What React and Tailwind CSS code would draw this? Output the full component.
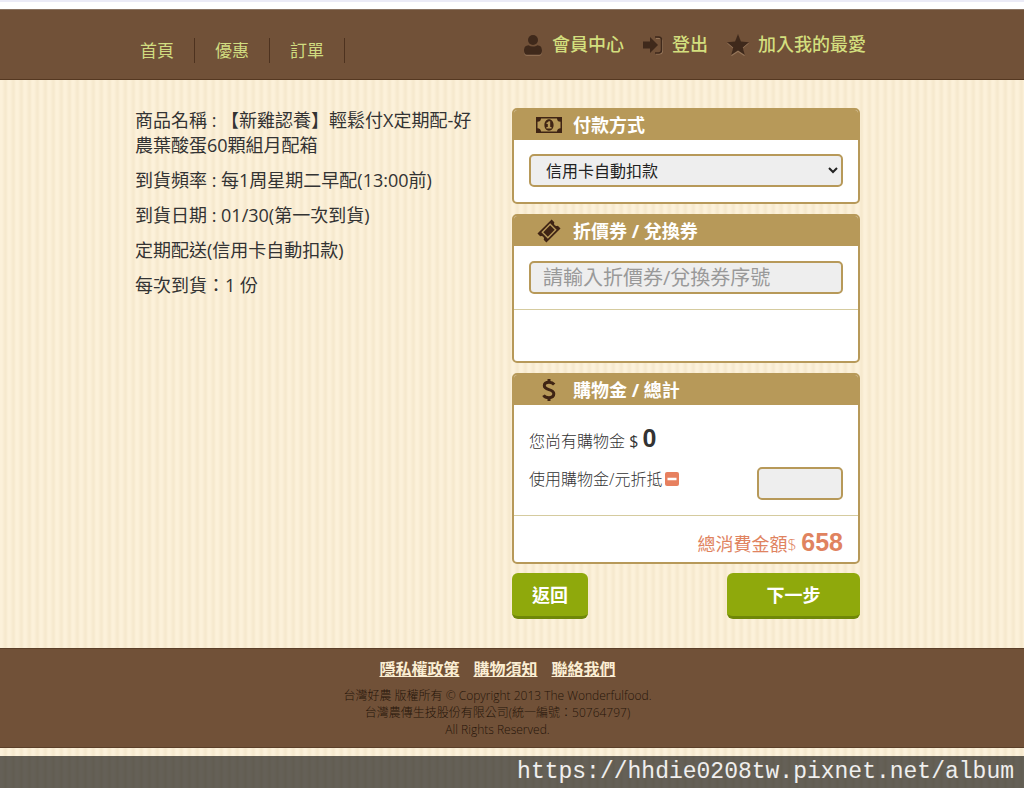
import React from "react";

const navLinks = ["首頁", "優惠", "訂單"];

const footerLinks = ["隱私權政策", "購物須知", "聯絡我們"];

const orderLines = [
  "商品名稱 : 【新雞認養】輕鬆付X定期配-好農葉酸蛋60顆組月配箱",
  "到貨頻率 : 每1周星期二早配(13:00前)",
  "到貨日期 : 01/30(第一次到貨)",
  "定期配送(信用卡自動扣款)",
  "每次到貨：1 份",
];

const UserIcon = () => (
  <svg width="20" height="22" viewBox="0 0 20 22" fill="#3f291b" aria-hidden="true">
    <path d="M1 16.5c0-3.500 2-5 4.500-5.200 1.200.8 2.700 1.200 4.500 1.200s3.300-.4 4.500-1.200c2.500.2 4.500 1.700 4.500 5.200 0 2.500-.8 4.300-2.800 4.300H3.800C1.800 20.800 1 19 1 16.500z" transform="translate(0 1)" fill="#96765a" />
    <path d="M1 16.500c0-3.500 2-5 4.500-5.200 1.200.8 2.700 1.200 4.500 1.200s3.300-.4 4.500-1.200c2.500.2 4.500 1.700 4.500 5.200 0 2.500-.8 4.300-2.800 4.300H3.800C1.800 20.800 1 19 1 16.500z" />
    <circle cx="10" cy="6" r="5" />
  </svg>
);

const LogoutIcon = () => (
  <svg width="20" height="20" viewBox="0 0 20 20" aria-hidden="true">
    <path d="M12 2.500h3.500a3 3 0 0 1 3 3v9.500a3 3 0 0 1-3 3H12" transform="translate(1 1)" fill="none" stroke="#96765a" strokeWidth="1.200" />
    <path d="M12 2h3.500a3 3 0 0 1 3 3v10a3 3 0 0 1-3 3H12" fill="none" stroke="#3f291b" strokeWidth="1.500" />
    <path d="M0 6.500h7V2l8 8-8 8v-4.500H0z" fill="#3f291b" />
  </svg>
);

const StarIcon = () => (
  <svg width="22" height="22" viewBox="0 0 22 22" aria-hidden="true">
    <path d="M11 0l3 7.600 8 .6-6.200 5.200 2 8L11 17l-6.800 4.400 2-8L0 8.200l8-.6z" transform="translate(0 1)" fill="#96765a" />
    <path d="M11 0l3 7.600 8 .6-6.200 5.200 2 7.600L11 16.600 4.200 21l2-7.600L0 8.200l8-.6z" fill="#3f291b" />
  </svg>
);

const MoneyIcon = () => (
  <svg width="26" height="18" viewBox="0 0 26 18" fill="#3f2414" aria-hidden="true">
    <path fillRule="evenodd" d="M0 1h26v16H0zM5 2.500c0 2-1.300 3.300-3.500 3.300v6.400c2.200 0 3.500 1.300 3.500 3.300h16c0-2 1.300-3.300 3.500-3.300V5.800c-2.200 0-3.500-1.300-3.500-3.300z" />
    <path fillRule="evenodd" d="M13 3.300c2.700 0 4.600 2.500 4.600 5.700s-1.900 5.700-4.600 5.700S8.400 12.200 8.400 9s1.900-5.700 4.600-5.700zM12.600 5.200c-.4.900-1.100 1.400-2.100 1.500v1.400h1.300v3h-1.400v1.500h5.100v-1.500h-1.300V5.200z" />
  </svg>
);

const TicketIcon = () => (
  <svg width="26" height="24" viewBox="0 0 26 24" aria-hidden="true">
    <g transform="translate(13 12) rotate(-45)">
      <path fill="#3f2414" fillRule="evenodd" d="M-10-6.300H10v3.800a2.600 2.600 0 0 0 0 5v3.800H-10V2.500a2.600 2.600 0 0 0 0-5zM-6.200-4.600v9.200h12.400v-9.200z" />
      <path fill="#3f2414" d="M-4.800-3.200H4.800v6.400H-4.800z" />
    </g>
  </svg>
);

const DollarIcon = () => (
  <svg width="26" height="24" viewBox="0 0 26 24" fill="none" stroke="#3f2414" strokeWidth="3" aria-hidden="true">
    <path d="M18.200 6.500C17 5 15 4.300 13 4.300c-2.800 0-4.700 1.300-4.700 3.500 0 5 9.500 2.600 9.500 8 0 2.400-2 3.900-4.900 3.900-2.300 0-4.300-.8-5.400-2.500" />
    <path d="M13 1v4M13 19v4" />
  </svg>
);

const Panel = ({ icon, title, children }) => (
  <section className="overflow-hidden rounded-[5px] border-2 border-[#b79959] bg-white">
    <h2 className="flex h-[30px] items-center gap-[11px] bg-[#b79959] pl-[22px] text-lg leading-7 font-bold text-white">
      {icon}
      {title}
    </h2>
    {children}
  </section>
);

const fieldStyle = "h-[33px] rounded-[5px] border-2 border-[#b79959] bg-[#eeeeee] outline-none";

const App = () => {
  return (
    <div className="bg-[repeating-linear-gradient(90deg,#fcf1da_0px,#fcf1da_2px,#f6e9ce_5px,#f6e9ce_6px,#fcf1da_8px)] font-['Open_Sans','Noto_Sans_CJK_TC',sans-serif] text-[#333]">
      <div className="h-[9px] border-t-2 border-[#ebebf7] bg-white" />

      <header className="border-y border-t-[#8a7463] border-b-[#553821] bg-[#715138] pr-[29px]">
        <div className="mx-auto flex h-[69px] max-w-[725px] items-start justify-between">
          <nav className="pt-7">
            <ul className="flex text-[17px] leading-[25px] text-[#d0dc80]">
              {navLinks.map((label) => (
                <li key={label} className="border-r border-[#4d321f] px-5 first:pl-[5px]">
                  <a href="#">{label}</a>
                </li>
              ))}
            </ul>
          </nav>
          <ul className="-mr-[6px] flex gap-[19px] pt-[22px] text-lg leading-[25px] font-medium whitespace-nowrap text-[#d3df7e]">
            <li>
              <a href="#" className="flex items-center gap-[9px]"><UserIcon />會員中心</a>
            </li>
            <li>
              <a href="#" className="flex items-center gap-[9px]"><LogoutIcon />登出</a>
            </li>
            <li>
              <a href="#" className="flex items-center gap-[9px]"><StarIcon />加入我的最愛</a>
            </li>
          </ul>
        </div>
      </header>

      <main className="pr-[29px]">
        <div className="mx-auto flex max-w-[725px] items-start justify-between pt-7 pb-[29px]">
          <div className="w-[345px] space-y-[10px] text-lg leading-[25px]">
            {orderLines.map((line) => (
              <p key={line}>{line}</p>
            ))}
          </div>

          <form className="w-[348px]" onSubmit={(e) => e.preventDefault()}>
            <div className="space-y-[10px]">
              <Panel icon={<MoneyIcon />} title="付款方式">
                <div className="px-[15px] pt-[14px] pb-[15px]">
                  <select aria-label="付款方式" className={`${fieldStyle} w-full pl-[11px] text-base text-[#222]`}>
                    <option>信用卡自動扣款</option>
                  </select>
                </div>
              </Panel>

              <Panel icon={<TicketIcon />} title="折價券 / 兌換券">
                <div className="border-b border-[#d5cb9f] px-[15px] py-[15px]">
                  <input
                    type="text"
                    aria-label="折價券/兌換券序號"
                    placeholder="請輸入折價券/兌換券序號"
                    className={`${fieldStyle} block w-full px-3 text-xl placeholder:text-[#999]`}
                  />
                </div>
                <div className="h-[51px]" />
              </Panel>

              <Panel icon={<DollarIcon />} title="購物金 / 總計">
                <div className="border-b border-[#d5cb9f] px-[15px] pt-[18px] pb-[15px] font-light">
                  <p className="leading-[30px]">
                    您尚有購物金 <span className="font-normal">$</span>{" "}
                    <b className="font-['Liberation_Sans',sans-serif] text-[25px] font-bold">0</b>
                  </p>
                  <div className="mt-[11px] flex items-start justify-between">
                    <label htmlFor="credit" className="flex items-center gap-[3px] leading-6">
                      使用購物金/元折抵
                      <svg width="14" height="14" viewBox="0 0 14 14" aria-hidden="true">
                        <rect width="14" height="14" rx="2" fill="#e7805f" />
                        <path d="M2.500 7h9" stroke="#fff" strokeWidth="2.400" />
                      </svg>
                    </label>
                    <input id="credit" type="text" className={`${fieldStyle} w-[86px] px-3 text-lg`} />
                  </div>
                </div>
                <p className="px-[15px] pt-[11px] pb-[3px] text-right text-lg leading-[30px] text-[#e0835f]">
                  總消費金額<span className="text-base font-light">$</span>{" "}
                  <b className="font-['Liberation_Sans',sans-serif] text-[25px]">658</b>
                </p>
              </Panel>
            </div>

            <div className="mt-[9px] flex justify-between text-lg font-bold text-white">
              <button type="button" className="h-[46px] w-[76px] rounded-[6px] border-b-[3px] border-[#6f8708] bg-[#8fa90c]">
                返回
              </button>
              <button type="submit" className="h-[46px] w-[133px] rounded-[6px] border-b-[3px] border-[#6f8708] bg-[#8fa90c]">
                下一步
              </button>
            </div>
          </form>
        </div>
      </main>

      <footer className="border-y border-[#5b3f29] bg-[#715138] pt-2 pr-[29px] pb-[9px] text-center">
        <ul className="flex justify-center gap-[14px] leading-6 font-bold text-[#fbeed3]">
          {footerLinks.map((label) => (
            <li key={label}>
              <a href="#" className="underline">{label}</a>
            </li>
          ))}
        </ul>
        <p className="mt-[6px] text-xs leading-[17px] font-light text-[#26150a]">
          台灣好農 版權所有 © Copyright 2013 The Wonderfulfood.
          <br />
          台灣農傳生技股份有限公司(統一編號：50764797)
          <br />
          All Rights Reserved.
        </p>
      </footer>

      <div className="mt-2 bg-black/60 pr-[10px] text-right font-['Liberation_Mono',monospace] text-[23px] leading-8 text-white/90">
        https://hhdie0208tw.pixnet.net/album
      </div>
    </div>
  );
};

export default App;
